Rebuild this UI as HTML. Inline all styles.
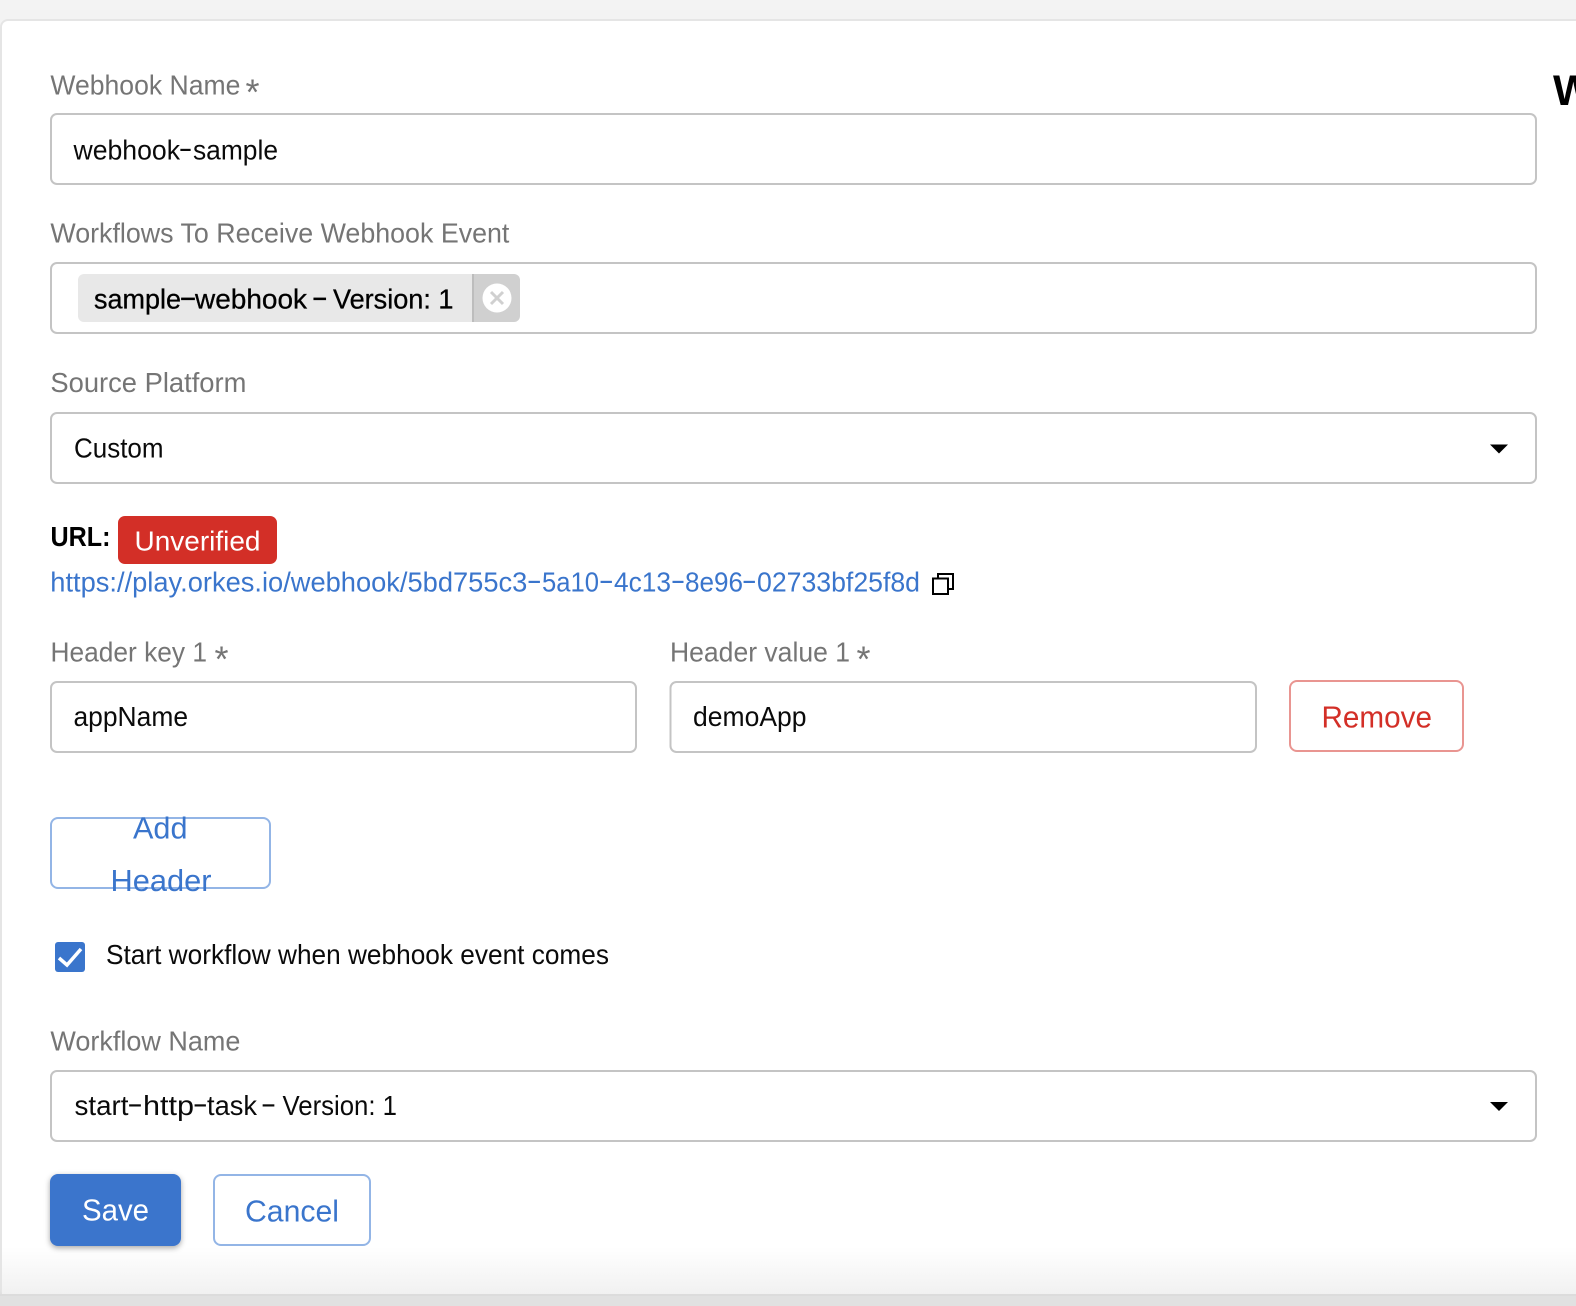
<!DOCTYPE html>
<html>
<head>
<meta charset="utf-8">
<style>
html,body{margin:0;padding:0;width:1576px;height:1306px;overflow:hidden;background:#e1e1e1}
svg{display:block;position:absolute;left:0;top:0}
text{font-family:"Liberation Sans",Arial,sans-serif;font-size:28px;fill:#000}
.l{fill:#757575;font-size:27.5px}
.i{fill:none;stroke:#c4c4c4;stroke-width:2}
.b{fill:#3a75cc;font-size:31px}
.v{font-size:28px;fill:#0a0a0a}
.a{fill:#757575;font-size:36px}
.u{fill:#3a75cc}
.m{stroke:#000;stroke-width:.3px}
</style>
</head>
<body>
<svg width="1576" height="1306" viewBox="0 0 1576 1306" xmlns="http://www.w3.org/2000/svg">
<defs>
<linearGradient id="f" x1="0" y1="0" x2="0" y2="1"><stop offset="0" stop-color="#ffffff"/><stop offset="1" stop-color="#f1f1f1"/></linearGradient>
<filter id="s" x="-20%" y="-20%" width="140%" height="150%"><feDropShadow dx="0" dy="2" stdDeviation="3" flood-color="#000" flood-opacity=".35"/></filter>
</defs>
<rect x="0" y="0" width="1576" height="1306" fill="#f3f3f3"/>
<rect x="0" y="1240" width="1576" height="66" fill="#e1e1e1"/>
<rect x="1" y="20" width="1600" height="1275" rx="7" fill="#fff" stroke="#e5e5e5" stroke-width="2"/>
<rect x="2" y="1247" width="1574" height="47" fill="url(#f)"/>
<path d="M0 1295H1576" stroke="#dcdcdc" stroke-width="2" fill="none"/>

<text x="1553" y="105" font-weight="700" style="font-size:43px">W</text>

<text class="l" x="50.4" y="94.4" textLength="190" lengthAdjust="spacingAndGlyphs">Webhook Name</text>
<text class="a" x="245.500" y="104.700">*</text>
<rect class="i" x="51" y="114" width="1485" height="70" rx="6"/>
<text class="v" x="73.500" y="159.300" textLength="106.500" lengthAdjust="spacingAndGlyphs">webhook</text>
<text class="v" x="178.500" y="157.300" textLength="14" lengthAdjust="spacingAndGlyphs">-</text>
<text class="v" x="193" y="159.300" textLength="85" lengthAdjust="spacingAndGlyphs">sample</text>

<text class="l" x="50.4" y="242.7" textLength="459" lengthAdjust="spacingAndGlyphs">Workflows To Receive Webhook Event</text>
<rect class="i" x="51" y="263" width="1485" height="70" rx="6"/>
<path d="M84 274H472V322H84a6 6 0 0 1-6-6V280a6 6 0 0 1 6-6z" fill="#e8e8e8"/>
<path d="M472 274H514a6 6 0 0 1 6 6V316a6 6 0 0 1-6 6H472z" fill="#d0d0d0"/>
<path d="M473 274V322" stroke="#bdbdbd" stroke-width="2"/>
<circle cx="497" cy="298" r="14.5" fill="#fff"/>
<path d="M491 292L503 304M503 292L491 304" stroke="#d0d0d0" stroke-width="3" fill="none"/>
<text class="m" x="94" y="308.700" textLength="87" lengthAdjust="spacingAndGlyphs">sample</text>
<text class="m" x="179" y="306.700" textLength="18" lengthAdjust="spacingAndGlyphs">-</text>
<text class="m" x="195" y="308.700" textLength="112" lengthAdjust="spacingAndGlyphs">webhook</text>
<text class="m" x="311.500" y="306.700" textLength="16.500" lengthAdjust="spacingAndGlyphs">-</text>
<text class="m" x="333" y="308.700" textLength="120.500" lengthAdjust="spacingAndGlyphs">Version: 1</text>

<text class="l" x="50.4" y="392" textLength="196" lengthAdjust="spacingAndGlyphs">Source Platform</text>
<rect class="i" x="51" y="413" width="1485" height="70" rx="6"/>
<text class="v" x="74" y="457.500" textLength="89.500" lengthAdjust="spacingAndGlyphs">Custom</text>
<path d="M1490 444.500H1508L1499 453.500z" fill="#000"/>

<text x="50.500" y="546" textLength="60" lengthAdjust="spacingAndGlyphs" font-weight="700">URL:</text>
<rect x="118" y="516" width="159" height="48" rx="7" fill="#d32f27"/>
<text x="134.500" y="550.700" textLength="126" lengthAdjust="spacingAndGlyphs" style="fill:#fff">Unverified</text>
<text class="u" x="50.300" y="591.300" textLength="477" lengthAdjust="spacingAndGlyphs">https://play.orkes.io/webhook/5bd755c3</text>
<text class="u" x="526.500" y="589.300" textLength="15.500" lengthAdjust="spacingAndGlyphs">-</text>
<text class="u" x="542" y="591.300" textLength="57" lengthAdjust="spacingAndGlyphs">5a10</text>
<text class="u" x="598.500" y="589.300" textLength="15.500" lengthAdjust="spacingAndGlyphs">-</text>
<text class="u" x="614" y="591.300" textLength="57" lengthAdjust="spacingAndGlyphs">4c13</text>
<text class="u" x="670.500" y="589.300" textLength="15" lengthAdjust="spacingAndGlyphs">-</text>
<text class="u" x="685" y="591.300" textLength="58" lengthAdjust="spacingAndGlyphs">8e96</text>
<text class="u" x="741.500" y="589.300" textLength="15.500" lengthAdjust="spacingAndGlyphs">-</text>
<text class="u" x="757" y="591.300" textLength="163" lengthAdjust="spacingAndGlyphs">02733bf25f8d</text>
<path d="M938 578V574H953V589H948.500" fill="none" stroke="#000" stroke-width="2"/>
<rect x="933" y="578.500" width="15" height="15.500" fill="none" stroke="#000" stroke-width="2"/>

<text class="l" x="50.500" y="661.7" textLength="156.500" lengthAdjust="spacingAndGlyphs">Header key 1</text>
<text class="a" x="214.500" y="671.400">*</text>
<rect class="i" x="51" y="682" width="585" height="70" rx="6"/>
<text class="v" x="73.500" y="726" textLength="114.500" lengthAdjust="spacingAndGlyphs">appName</text>

<text class="l" x="670" y="661.7" textLength="180" lengthAdjust="spacingAndGlyphs">Header value 1</text>
<text class="a" x="856.500" y="671.400">*</text>
<rect class="i" x="670.500" y="682" width="585.500" height="70" rx="6"/>
<text class="v" x="693" y="726" textLength="113.500" lengthAdjust="spacingAndGlyphs">demoApp</text>

<rect x="1290" y="681" width="173" height="70" rx="7" fill="#fff" stroke="#e99591" stroke-width="2"/>
<text class="b" x="1321.500" y="727.700" textLength="110.500" lengthAdjust="spacingAndGlyphs" style="fill:#d32f27">Remove</text>

<rect x="51" y="818" width="219" height="70" rx="7" fill="#fff" stroke="#93b5e6" stroke-width="2"/>
<text class="b" x="133" y="838.300" textLength="54.500" lengthAdjust="spacingAndGlyphs">Add</text>
<text class="b" x="110.500" y="891" textLength="101" lengthAdjust="spacingAndGlyphs">Header</text>

<rect x="55" y="942" width="30" height="30" rx="3" fill="#3a75cc"/>
<path d="M59 958L67 965L81 949" fill="none" stroke="#fff" stroke-width="3.500"/>
<text class="v" x="106" y="964" textLength="503" lengthAdjust="spacingAndGlyphs" style="font-size:27.500px">Start workflow when webhook event comes</text>

<text class="l" x="50.400" y="1050.700" textLength="190" lengthAdjust="spacingAndGlyphs">Workflow Name</text>
<rect class="i" x="51" y="1071" width="1485" height="70" rx="6"/>
<text class="v" x="74.500" y="1115" textLength="54" lengthAdjust="spacingAndGlyphs">start</text>
<text class="v" x="127" y="1113" textLength="16" lengthAdjust="spacingAndGlyphs">-</text>
<text class="v" x="143" y="1115" textLength="51" lengthAdjust="spacingAndGlyphs">http</text>
<text class="v" x="192.500" y="1113" textLength="15.500" lengthAdjust="spacingAndGlyphs">-</text>
<text class="v" x="207" y="1115" textLength="50" lengthAdjust="spacingAndGlyphs">task</text>
<text class="v" x="260.500" y="1113" textLength="16" lengthAdjust="spacingAndGlyphs">-</text>
<text class="v" x="282.500" y="1115" textLength="114.500" lengthAdjust="spacingAndGlyphs">Version: 1</text>
<path d="M1490 1102H1508L1499 1111z" fill="#000"/>

<rect x="50" y="1174" width="131" height="72" rx="8" fill="#3a75cc" filter="url(#s)"/>
<text class="b" x="82" y="1220.700" textLength="67" lengthAdjust="spacingAndGlyphs" style="fill:#fff">Save</text>
<rect x="214" y="1175" width="156" height="70" rx="7" fill="#fff" stroke="#93b5e6" stroke-width="2"/>
<text class="b" x="245" y="1221.700" textLength="94" lengthAdjust="spacingAndGlyphs">Cancel</text>
</svg>
</body>
</html>
